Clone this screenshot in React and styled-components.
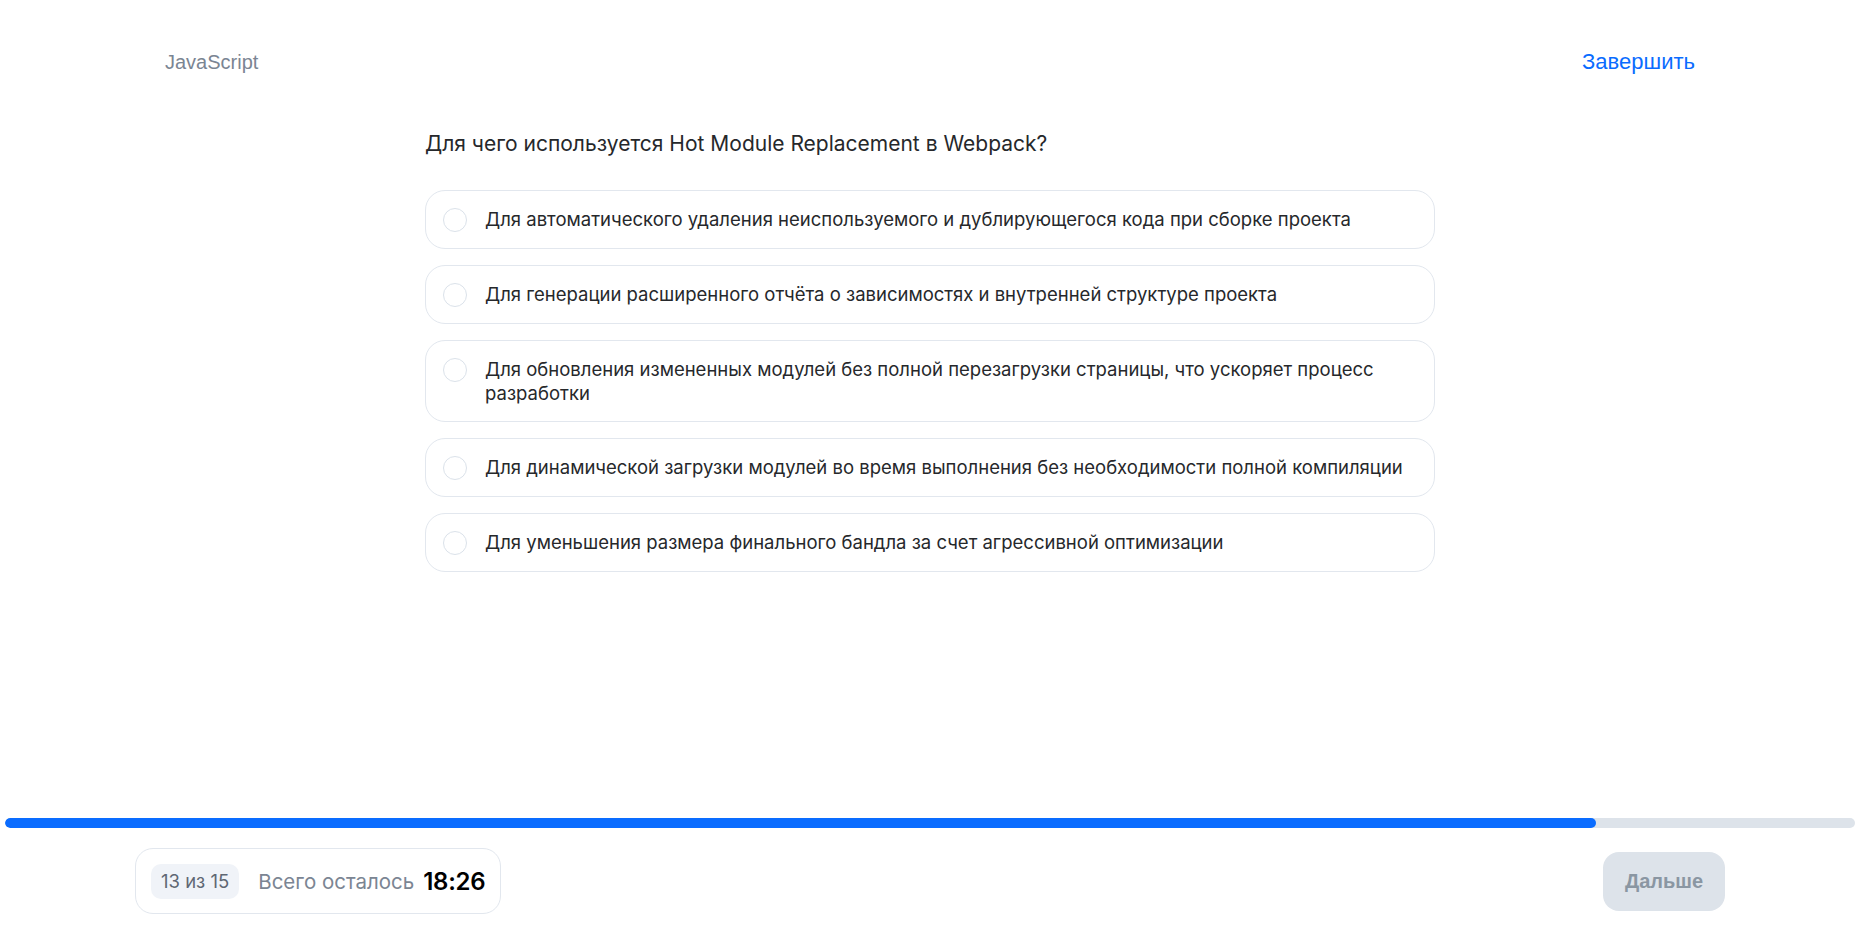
import React from "react";
import styled, { createGlobalStyle } from "styled-components";

const Global = createGlobalStyle`
  html, body { margin: 0; padding: 0; background: #fff; }
  body { font-family: Inter, "Noto Sans", sans-serif; color: #1f2328; }
  * { box-sizing: border-box; }
`;

const Page = styled.div`
  min-height: 100vh;
  display: flex;
  flex-direction: column;
`;

const Header = styled.header`
  width: 1530px;
  margin: 0 auto;
  padding-top: 49px;
  display: flex;
  justify-content: space-between;
  align-items: center;
  font-family: "Liberation Sans", Arial, sans-serif;
  line-height: 26px;
`;

const Topic = styled.span`
  color: #7b8593;
  font-size: 20px;
`;

const FinishLink = styled.a`
  color: #0a6cff;
  font-size: 22px;
  text-decoration: none;
  cursor: pointer;
`;

const Main = styled.main`
  width: 1010px;
  margin: 0 auto;
  padding-top: 55px;
`;

const Question = styled.h2`
  margin: 0 0 32px;
  font-size: 21px;
  font-weight: 400;
  line-height: 28px;
  color: #26282b;
`;

const Options = styled.div`
  display: flex;
  flex-direction: column;
  gap: 16px;
`;

const Option = styled.label`
  display: flex;
  align-items: flex-start;
  gap: 18px;
  padding: 16px 17px;
  border: 1px solid #e2e7ee;
  border-radius: 20px;
  cursor: pointer;
  font-size: 18.5px;
  line-height: 24px;
  color: #26282b;
`;

const Radio = styled.span`
  flex: none;
  width: 24px;
  height: 24px;
  margin-top: 1px;
  border-radius: 50%;
  border: 1.5px solid #dbe2ea;
  background: #fff;
`;

const Footer = styled.footer`
  margin-top: auto;
  padding-bottom: 21px;
`;

const Track = styled.div`
  height: 10px;
  margin: 0 5px;
  border-radius: 5px;
  background: #dde3ea;
  overflow: hidden;
`;

const Fill = styled.div`
  height: 100%;
  border-radius: 5px;
  background: #0a6cff;
`;

const FooterRow = styled.div`
  display: flex;
  justify-content: space-between;
  align-items: center;
  padding: 20px 135px 0 135px;
`;

const TimerBox = styled.div`
  display: flex;
  align-items: center;
  height: 66px;
  padding: 0 15px 0 15px;
  border: 1px solid #e2e7ee;
  border-radius: 18px;
`;

const Counter = styled.span`
  display: inline-flex;
  align-items: center;
  height: 35px;
  padding: 0 10px;
  border-radius: 10px;
  background: #f0f3f8;
  color: #5f6773;
  font-size: 18.5px;
`;

const RemainLabel = styled.span`
  margin-left: 19px;
  color: #7b8593;
  font-size: 20.5px;
`;

const Time = styled.span`
  margin-left: 9px;
  color: #000;
  font-size: 24px;
  font-weight: 600;
  letter-spacing: -0.3px;
`;

const NextButton = styled.button`
  width: 122px;
  height: 59px;
  border: none;
  border-radius: 16px;
  background: #dde3ea;
  color: #8a96a2;
  font-family: "Liberation Sans", Arial, sans-serif;
  font-size: 20px;
  font-weight: 700;
  cursor: default;
`;

const answers = [
  "Для автоматического удаления неиспользуемого и дублирующегося кода при сборке проекта",
  "Для генерации расширенного отчёта о зависимостях и внутренней структуре проекта",
  "Для обновления измененных модулей без полной перезагрузки страницы, что ускоряет процесс разработки",
  "Для динамической загрузки модулей во время выполнения без необходимости полной компиляции",
  "Для уменьшения размера финального бандла за счет агрессивной оптимизации",
];

export default function App() {
  return (
    <Page>
      <Global />
      <Header>
        <Topic>JavaScript</Topic>
        <FinishLink>Завершить</FinishLink>
      </Header>
      <Main>
        <Question>Для чего используется Hot Module Replacement в Webpack?</Question>
        <Options>
          {answers.map((a) => (
            <Option key={a}>
              <Radio />
              <span>{a}</span>
            </Option>
          ))}
        </Options>
      </Main>
      <Footer>
        <Track>
          <Fill style={{ width: `${(1591 / 1850) * 100}%` }} />
        </Track>
        <FooterRow>
          <TimerBox>
            <Counter>13 из 15</Counter>
            <RemainLabel>Всего осталось</RemainLabel>
            <Time>18:26</Time>
          </TimerBox>
          <NextButton disabled>Дальше</NextButton>
        </FooterRow>
      </Footer>
    </Page>
  );
}
